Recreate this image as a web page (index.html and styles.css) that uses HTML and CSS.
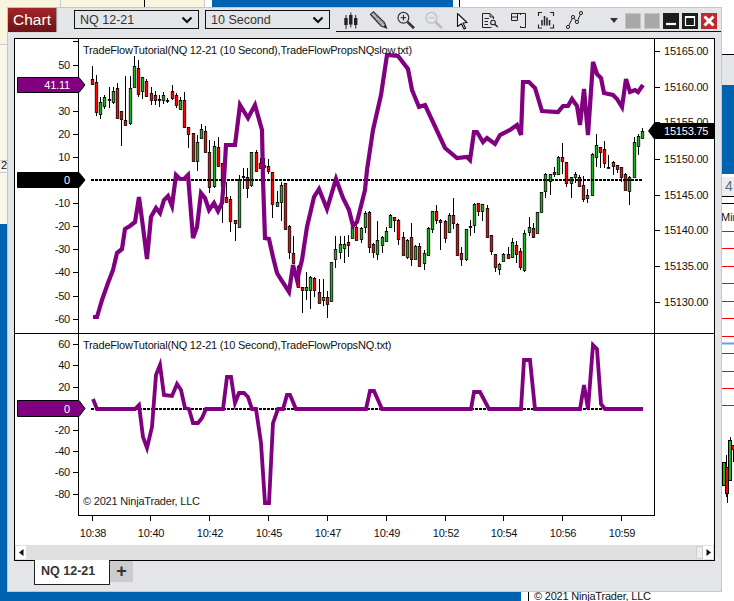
FILE: index.html
```html
<!DOCTYPE html>
<html lang="en">
<head>
  <meta charset="UTF-8">
  <title>Chart - NQ 12-21</title>
  <link rel="stylesheet" href="styles.css">
</head>
<body>
  <!-- whatever is behind the chart window -->
  <svg class="backdrop" width="734" height="601">
    <rect width="734" height="601" fill="#ffffff"/>
    <rect x="0" y="0" width="204" height="44" fill="#f8f4dd"/>
    <rect x="0" y="45" width="8" height="180" fill="#f8f7ea"/>
    <rect x="0" y="224" width="8" height="377" fill="#0063b1"/>
    <rect x="212" y="0" width="241" height="8" fill="#0063b1"/>
    <rect x="0" y="592" width="521" height="9" fill="#0063b1"/>
    <rect x="722" y="55" width="12" height="30" fill="#e4e5e8"/>
    <rect x="722" y="85" width="12" height="89" fill="#0063b1"/>
    <rect x="722" y="177" width="12" height="19" fill="#eeeeee"/>
    <path d="M60.5 0V8M204.5 0V8M0 44.5H8M0 160.5H8M0 172.5H8" stroke="#c8c8c8" fill="none"/>
    <path d="M144.5 0V8M459.5 0V8M722 54.5H734M722 196.5H734M722 203.5H734M528.5 592V601" stroke="#000000" fill="none"/>
    <path d="M722 231.5H734M722 248.5H734M722 266.5H734M722 283.5H734M722 301.5H734M722 318.5H734M722 336.5H734M722 353.5H734M722 371.5H734M722 388.5H734M722 405.5H734" stroke="#ff0000" fill="none"/>
    <path d="M722 343.5H734" stroke="#6f9be8" stroke-width="2" fill="none"/>
    <path d="M726.5 455V497M727.5 467V503M730.5 437V480M733.5 445V462" stroke="#000000" fill="none"/>
    <rect x="722.5" y="462.5" width="3" height="23" fill="#1fb01f" stroke="#000000"/>
    <rect x="725.5" y="467.5" width="3" height="26" fill="#ff0000" stroke="#000000"/>
    <rect x="728.5" y="440.5" width="3" height="40" fill="#1fb01f" stroke="#000000"/>
    <rect x="731.5" y="445.5" width="3" height="4" fill="#ff0000" stroke="#000000"/>
    <text class="backdrop-text" x="1" y="169">2</text>
    <text class="backdrop-cell" x="725" y="191">4</text>
    <text class="backdrop-text" x="721" y="221">Minu</text>
    <text class="backdrop-copy" x="534" y="600">© 2021 NinjaTrader, LLC</text>
  </svg>

  <div class="window">
    <div class="toolbar">
      <div class="chart-title">Chart</div>
      <div class="dropdown">
        <span>NQ 12-21</span>
        <svg width="12" height="8" viewBox="0 0 12 8"><path d="M1.5 1.5L6 6L10.5 1.5" fill="none" stroke="#111" stroke-width="2.2"/></svg>
      </div>
      <div class="dropdown">
        <span>10 Second</span>
        <svg width="12" height="8" viewBox="0 0 12 8"><path d="M1.5 1.5L6 6L10.5 1.5" fill="none" stroke="#111" stroke-width="2.2"/></svg>
      </div>

      <div class="tools">
        <!-- bars -->
        <svg class="tool" viewBox="0 0 20 20"><path d="M6 5V19M10.8 2.5V17.5M15.7 5V18.5" stroke="#222" stroke-width="1"/><path d="M6 8V15M10.8 5V14.5M15.7 8V15" stroke="#222" stroke-width="3.4"/></svg>
        <!-- pencil -->
        <svg class="tool" viewBox="0 0 20 20"><path d="M2.5 4.5L5.5 1.8L16.5 12.5L18.5 18L13 16Z" fill="#bdbdbd" stroke="#333" stroke-width="1.2"/><path d="M4.5 5.5L14.5 15M6.5 4.5L16 14" stroke="#555" stroke-width="1" stroke-dasharray="1 1"/><path d="M15.5 16L18.5 18L17.3 14.8Z" fill="#222"/></svg>
        <!-- zoom in -->
        <svg class="tool" viewBox="0 0 20 20"><circle cx="7.4" cy="7.8" r="5.4" fill="none" stroke="#333" stroke-width="1.2"/><path d="M4.6 7.8H10.2M7.4 5V10.6" stroke="#222" stroke-width="1.1"/><path d="M11.6 12L18 18.2" stroke="#333" stroke-width="2.6"/></svg>
        <!-- zoom out, disabled -->
        <svg class="tool" viewBox="0 0 20 20"><circle cx="7.4" cy="7.8" r="5.4" fill="none" stroke="#bcbcbc" stroke-width="1.2"/><path d="M4.6 7.8H10.2" stroke="#bcbcbc" stroke-width="1.1"/><path d="M11.6 12L18 18.2" stroke="#bcbcbc" stroke-width="2.6"/></svg>
        <!-- pointer -->
        <svg class="tool" viewBox="0 0 20 20"><path d="M5.5 3.5L15 12.5L11 13L13.6 18.2L12 19L9.4 13.8L5.5 16.5Z" fill="#f4f4f4" stroke="#111" stroke-width="1.1" stroke-linejoin="round"/></svg>
        <!-- data page -->
        <svg class="tool" viewBox="0 0 20 20"><path d="M11.5 17.5H2.5V3.5H10L13.5 7V9M10 3.5V7H13.5" fill="none" stroke="#222" stroke-width="1"/><path d="M4.5 8.5H9M4.5 11.5H8M4.5 14.5H8" stroke="#222"/><circle cx="13" cy="12.5" r="2.3" fill="none" stroke="#222" stroke-width="1.1"/><path d="M14.8 14.3L17.8 17" stroke="#222" stroke-width="1.5"/></svg>
        <!-- properties -->
        <svg class="tool" viewBox="0 0 20 20"><path d="M3.5 3.5H9.5V10.5H3.5ZM3.5 7H9.5M9.5 3.5H17.5V17.5H12.5M12.5 3.5V5M12.5 16V17.5" fill="none" stroke="#222" stroke-width="1"/></svg>
        <!-- indicators -->
        <svg class="tool" viewBox="0 0 20 20"><path d="M2.5 6V2.5H6M14 2.5H17.5V6M17.5 14.5V18H14M6 18H2.5V14.5" fill="none" stroke="#222" stroke-width="1.1"/><path d="M6 15.5V10M8.5 15.5V6M11 15.5V7.5M13.5 15.5V10" stroke="#222" stroke-width="1.5"/></svg>
        <!-- drawing line -->
        <svg class="tool" viewBox="0 0 20 20"><path d="M4 17L9 7L13 12L17 3" fill="none" stroke="#222" stroke-width="1"/><circle cx="4" cy="17" r="1.6" fill="#e4e5e8" stroke="#222"/><circle cx="9" cy="7" r="1.6" fill="#e4e5e8" stroke="#222"/><circle cx="13" cy="12" r="1.6" fill="#e4e5e8" stroke="#222"/><circle cx="17" cy="3" r="1.6" fill="#e4e5e8" stroke="#222"/></svg>
        <div class="caret"></div>
        <div class="win-btn grey"></div>
        <div class="win-btn grey"></div>
        <div class="win-btn dark"><svg width="16" height="16" viewBox="0 0 16 16"><path d="M3 11H13" stroke="#fff" stroke-width="2.2"/></svg></div>
        <div class="win-btn dark"><svg width="16" height="16" viewBox="0 0 16 16"><path d="M3.5 3.5H12.5V12.5H3.5Z" fill="none" stroke="#fff" stroke-width="1.2"/><path d="M3 4H13" stroke="#fff" stroke-width="2"/></svg></div>
        <div class="win-btn close"><svg width="16" height="16" viewBox="0 0 16 16"><path d="M3.5 3.5L12.5 12.5M12.5 3.5L3.5 12.5" stroke="#fff" stroke-width="3"/></svg></div>
      </div>
    </div>

    <div class="chart-frame">
      <svg id="chart" class="chart" width="699" height="506" viewBox="15 39 699 506"></svg>
      <div class="scrollbar">
        <div class="scroll-btn"><svg width="5" height="7" viewBox="0 0 5 7"><path d="M4.5 0V7L0 3.5Z" fill="#111"/></svg></div>
        <div class="scroll-thumb"></div>
        <div class="scroll-btn"><svg width="5" height="7" viewBox="0 0 5 7"><path d="M0.5 0V7L5 3.5Z" fill="#111"/></svg></div>
      </div>
    </div>

    <div class="tabs">
      <div class="tab">NQ 12-21</div>
      <div class="tab-add">+</div>
    </div>
  </div>

  <script src="chart.js"></script>
</body>
</html>
```

FILE: styles.css
```css
body {
  margin: 0;
  width: 734px;
  height: 601px;
  overflow: hidden;
  position: relative;
  font-family: "Liberation Sans", Arial, sans-serif;
}
.backdrop {
  position: absolute;
  left: 0;
  top: 0;
}
.backdrop-text {
  font-size: 11px;
  fill: #111;
}
.backdrop-cell {
  font-size: 14px;
  fill: #5a6a80;
}
.backdrop-copy {
  font-size: 11px;
  letter-spacing: -0.2px;
  fill: #111;
}
.window {
  position: absolute;
  left: 7px;
  top: 7px;
  width: 713px;
  height: 583px;
  border: 1px solid #c4c6c8;
  background-color: #e4e5e8;
  display: flex;
  flex-direction: column;
}
.toolbar {
  height: 24px;
  display: flex;
  align-items: flex-start;
}
.chart-title {
  width: 48px;
  height: 24px;
  line-height: 24px;
  text-align: center;
  color: #fff;
  font-size: 15.5px;
  background: linear-gradient(#a3242a, #6e1216);
  box-shadow: 1px 0 1px #999;
}
.dropdown {
  height: 17px;
  margin-top: 2px;
  margin-left: 18px;
  padding: 0 5px;
  width: 113px;
  border: 1px solid #111;
  display: flex;
  align-items: center;
  justify-content: space-between;
  font-size: 12.5px;
  color: #333;
}
.dropdown + .dropdown {
  margin-left: 6px;
}
.tools {
  flex: 1;
  height: 23px;
  margin-left: 6px;
  border-bottom: 1px solid #111;
  display: flex;
  align-items: flex-start;
}
.tool {
  width: 20px;
  height: 20px;
  margin: 2px 4px 0;
}
.caret {
  width: 0;
  height: 0;
  margin: 10px 7px 0 22px;
  border-left: 4.5px solid transparent;
  border-right: 4.5px solid transparent;
  border-top: 5px solid #333;
}
.win-btn {
  width: 16px;
  height: 16px;
  margin: 5px 3px 0 0;
  box-sizing: border-box;
}
.win-btn.grey {
  background: #a8a8a8;
  border: 1px solid #c4c4c4;
}
.win-btn.dark {
  background: #1c1c1c;
}
.win-btn.close {
  background: #c1272d;
}
.win-btn svg {
  display: block;
}
.chart-frame {
  width: 699px;
  height: 521px;
  margin: 6px 0 0 6px;
  border: 1px solid #000;
  background: #fff;
}
.chart {
  display: block;
}
.scrollbar {
  height: 15px;
  background: #e0e0e0;
  display: flex;
  align-items: center;
  padding: 0 1px;
}
.scroll-btn {
  width: 10px;
  height: 13px;
  background: #fff;
  display: flex;
  align-items: center;
  justify-content: center;
}
.scroll-thumb {
  width: 7px;
  height: 13px;
  margin-left: auto;
  background: #eeeeee;
  border: 1px solid #d0d0d0;
  box-sizing: border-box;
}
.tabs {
  display: flex;
  margin: -1px 0 0 26px;
}
.tab {
  height: 24px;
  width: 68px;
  border: 1px solid #222;
  border-top: none;
  background: #fff;
  color: #333;
  font-size: 12.5px;
  font-weight: bold;
  line-height: 23px;
  padding-left: 6px;
}
.tab-add {
  width: 23px;
  height: 21px;
  margin-top: 1px;
  background: #cccccc;
  color: #333;
  font-size: 18px;
  font-weight: bold;
  line-height: 20px;
  text-align: center;
}
.axis-text {
  font-size: 11px;
  letter-spacing: -0.2px;
  fill: #111;
}
.end {
  text-anchor: end;
}
.mid {
  text-anchor: middle;
}
.light {
  fill: #fff;
}
.copyright {
  fill: #222;
}
```

FILE: chart.js
```js
const svg = document.getElementById('chart');
const NS = 'http://www.w3.org/2000/svg';

function add(tag, attrs, text) {
  const el = document.createElementNS(NS, tag);
  for (const k in attrs) el.setAttribute(k, attrs[k]);
  if (text !== undefined) el.textContent = text;
  svg.appendChild(el);
  return el;
}

// hi, body top, body bottom, lo, 1 = up bar (green)
const bars = [
  [66,79,84,85,0],[75,82,112,116,0],[97,102,114,119,1],[95,97,106,109,1],[87,99,100,108,0],
  [87,91,102,104,1],[83,88,118,118,0],[111,111,119,146,0],[76,120,125,125,0],[76,88,123,125,1],
  [56,66,87,87,1],[60,68,94,97,0],[77,77,91,99,1],[79,81,96,97,0],[87,93,100,105,0],
  [91,95,100,105,0],[95,99,100,107,0],[92,95,100,104,1],[98,100,100,103,0],[85,91,98,100,0],
  [93,95,105,108,0],[97,100,109,110,1],[92,100,127,128,0],[127,127,134,148,0],[133,133,161,161,0],
  [135,142,161,171,1],[124,129,138,138,1],[126,131,152,152,0],[140,152,187,193,0],[141,146,186,188,1],
  [137,147,166,166,0],[163,163,186,223,0],[182,197,202,202,0],[196,199,221,232,0],[220,220,223,241,0],
  [175,179,227,227,1],[168,176,177,189,0],[168,177,188,198,0],[152,152,185,187,1],[150,152,171,171,0],
  [158,163,168,168,0],[158,165,167,170,0],[159,166,171,174,0],[172,172,204,218,0],[191,202,206,206,1],
  [182,185,202,221,1],[183,183,229,229,0],[225,226,252,259,0],[236,253,263,263,0],[265,266,287,287,0],
  [287,287,290,313,0],[272,287,290,300,1],[276,277,290,309,1],[277,278,290,297,0],[279,292,303,303,0],
  [279,297,300,306,1],[291,297,304,318,0],[262,262,301,301,1],[236,249,259,268,1],[236,244,252,259,1],
  [236,244,248,263,1],[235,242,245,257,0],[225,227,238,238,1],[225,227,240,240,0],[227,228,239,243,1],
  [211,213,227,233,1],[211,212,247,253,0],[243,244,252,258,0],[221,240,254,260,1],[236,237,245,253,1],
  [227,231,241,241,1],[214,215,227,227,1],[217,217,220,232,0],[219,220,239,245,0],[232,237,255,255,0],
  [239,240,257,259,1],[223,237,259,266,0],[245,246,259,259,1],[243,246,266,266,0],[250,253,263,270,1],
  [227,228,255,255,1],[211,211,229,233,1],[205,211,220,224,0],[219,220,222,250,0],[220,221,238,243,0],
  [213,215,232,233,1],[198,215,223,229,0],[223,224,255,255,0],[247,253,259,266,0],[229,229,259,261,1],
  [220,226,226,236,0],[203,204,225,233,1],[203,203,211,216,0],[204,204,211,221,1],[205,208,237,237,0],
  [235,235,251,255,0],[254,254,267,272,0],[263,264,269,275,1],[253,254,261,261,1],[247,254,258,258,0],
  [238,242,257,258,1],[241,245,254,263,0],[248,251,267,270,0],[230,233,270,272,1],[217,227,232,236,1],
  [223,228,237,238,0],[212,212,233,233,1],[192,192,212,212,1],[173,174,191,198,1],[174,174,181,195,1],
  [167,172,174,177,0],[156,157,174,175,1],[143,157,161,174,0],[162,162,183,187,0],[177,177,183,198,1],
  [172,174,177,183,1],[175,177,186,187,0],[176,185,199,202,0],[189,195,198,203,1],[153,154,195,195,1],
  [134,145,157,167,1],[147,147,152,168,0],[141,149,163,168,0],[155,167,167,168,0],[161,162,166,175,0],
  [165,165,169,173,0],[167,167,177,182,0],[173,174,190,190,0],[176,177,191,205,1],[137,142,177,177,1],
  [134,136,146,155,1],[128,131,138,138,1]
];

const fast = '93,317 97,317 102,300 108,283 113,270 117,253 122,249 125,229 130,226 135,222 139,197 143,227 147,259 151,217 156,208 160,213 164,200 168,196 172,206 176,175 180,179 184,179 188,175 193,238 197,227 201,193 205,198 209,210 214,203 218,211 222,203 224,179 226,145 235,145 240,105 248,118 255,105 262,130 263,180 265,238 269,239 273,257 277,273 280,278 289,292 293,265 297,280 302,260 307,227 314,197 319,189 327,209 336,179 343,198 349,210 353,226 357,222 365,190 367,170 373,130 381,95 387,55 398,56 408,69 412,90 419,107 425,105 432,120 445,148 457,158 467,157 470,160 474,132 477,132 483,142 487,138 495,144 500,135 510,130 517,125 521,135 523,82 529,82 535,88 542,111 558,112 563,106 568,106 572,99 577,106 580,125 584,89 588,135 593,62 597,74 601,78 604,93 613,95 617,99 622,107 626,79 630,92 635,90 638,92 643,85';
const slow = '93,399 97,409 135,409 139,405 143,437 147,448 152,427 156,375 160,365 164,395 172,396 177,384 181,390 185,408 189,409 193,423 198,423 202,418 206,409 223,409 227,377 231,377 235,403 239,393 244,393 248,397 252,409 256,409 261,443 265,503 269,503 273,423 278,409 283,409 287,395 290,395 296,409 366,409 370,391 374,391 382,409 471,409 474,392 480,392 489,409 521,409 524,360 530,360 535,409 580,409 584,385 588,409 593,345 597,349 601,404 605,409 643,409';

// candles
bars.forEach((b, i) => {
  const x = Math.floor(92.3 + 4.2 * i);
  add('path', { d: `M${x + 0.5} ${b[0]}V${b[3]}`, stroke: '#000' });
  add('rect', {
    x: x - 0.75, y: b[1] + 0.5, width: 2.5, height: Math.max(b[2] - b[1], 1),
    fill: b[4] ? '#1fb01f' : '#ff0000', stroke: '#000', 'stroke-width': 0.8
  });
});

// zero lines
['M91 180H643', 'M91 409H643'].forEach(d => {
  add('path', { d, stroke: '#000', 'stroke-width': 2, 'stroke-dasharray': '3 1', fill: 'none' });
});

add('polyline', { points: fast, fill: 'none', stroke: '#800080', 'stroke-width': 4.2 });
add('polyline', { points: slow, fill: 'none', stroke: '#800080', 'stroke-width': 3.8 });

// axis lines
add('path', { d: 'M78.5 39V515M654.5 39V515M78 515.5H655M15 333.5H714', stroke: '#000', fill: 'none' });

function label(x, y, text, cls) {
  add('text', { x, y, class: 'axis-text ' + (cls || '') }, text);
}

// left scale, upper panel (the 40 and 0 labels sit under the markers)
add('path', { d: 'M73 41.5H78', stroke: '#000' });
for (let v = 50; v >= -60; v -= 10) {
  const y = Math.round(180 - v * 2.31);
  add('path', { d: `M73 ${y + 0.5}H78`, stroke: '#000' });
  if (v !== 0 && v !== 40) label(70, y + 4, String(v), 'end');
}
// left scale, lower panel
[[60, 344], [40, 365], [20, 387], [0, 409], [-20, 430], [-40, 451], [-60, 472], [-80, 494]].forEach(t => {
  add('path', { d: `M73 ${t[1] + 0.5}H78`, stroke: '#000' });
  if (t[0] !== 0) label(70, t[1] + 4, String(t[0]), 'end');
});
// right scale
[[15165, 51], [15160, 87], [15155, 122], [15150, 159], [15145, 195], [15140, 230], [15135, 266], [15130, 302]].forEach(t => {
  add('path', { d: `M655 ${t[1] + 0.5}H660`, stroke: '#000' });
  label(664, t[1] + 4, t[0] + '.00');
});
// time scale
[[92, '10:38'], [150, '10:40'], [209, '10:42'], [268, '10:45'], [327, '10:47'], [386, '10:49'], [445, '10:52'], [503, '10:54'], [562, '10:56'], [621, '10:59']].forEach(t => {
  add('path', { d: `M${t[0] + 0.5} 516V521`, stroke: '#000' });
  label(t[0] + 1, 537, t[1], 'mid');
});

// value markers
function marker(y1, y2, fill, text) {
  const mid = (y1 + y2) / 2;
  add('path', { d: `M17.5 ${y1 + 0.5}H79L85 ${mid}L79 ${y2 - 0.5}H17.5Z`, fill, stroke: '#000' });
  label(70, mid + 4, text, 'end light');
}
marker(77, 93, '#800080', '41.11');
marker(172, 188, '#000', '0');
marker(400, 417, '#800080', '0');

add('path', { d: 'M648 131L654 123H714V139H654Z', fill: '#000' });
label(664, 135, '15153.75', 'light');

label(83, 54, 'TradeFlowTutorial(NQ 12-21 (10 Second),TradeFlowPropsNQslow.txt)');
label(83, 349, 'TradeFlowTutorial(NQ 12-21 (10 Second),TradeFlowPropsNQ.txt)');
label(83, 505, '© 2021 NinjaTrader, LLC', 'copyright');
```
